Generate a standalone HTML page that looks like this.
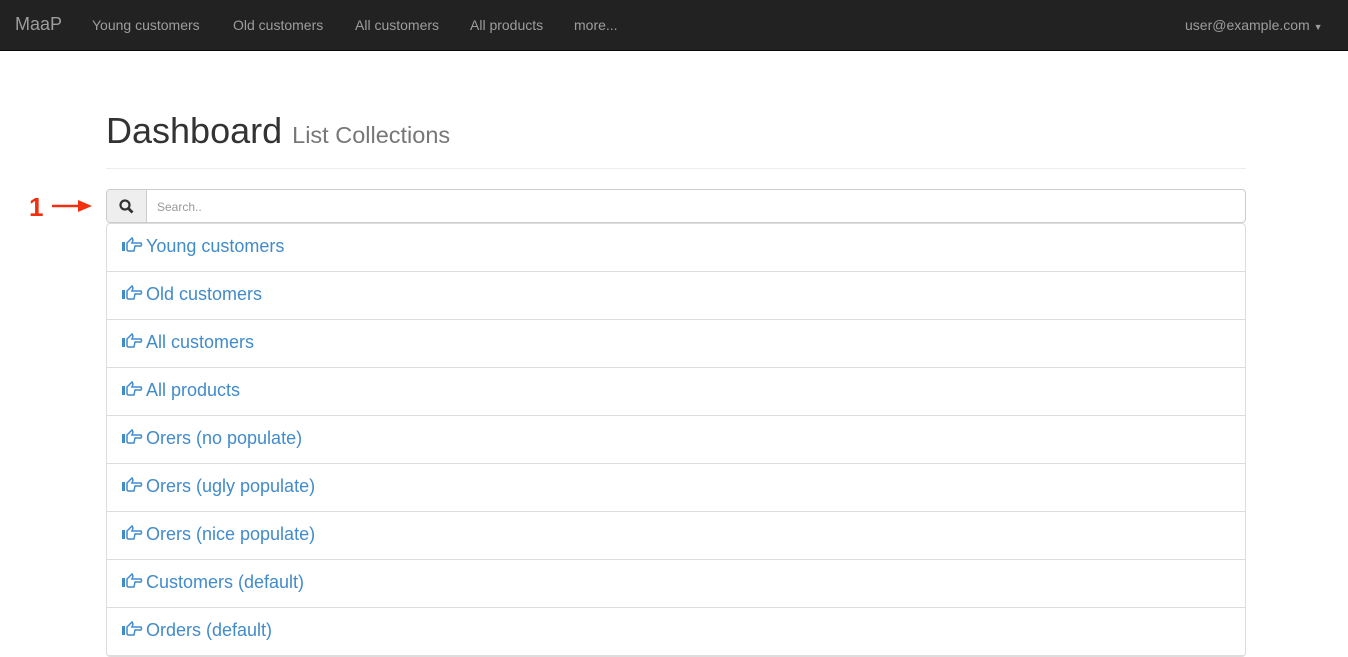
<!DOCTYPE html>
<html><head><style>
body{margin:0;font-family:"Liberation Sans",sans-serif;background:#fff;width:1348px;height:634px;overflow:hidden;position:relative}
.nav{height:50px;background:#222;border-bottom:1px solid #080808;position:relative;font-size:14px;color:#9d9d9d}
.nav span{position:absolute;top:17px}
.brand{font-size:18px;top:14px!important;left:15px}
h1{position:absolute;left:106px;top:111px;margin:0;font-size:36px;font-weight:500;color:#333;line-height:40px}
h1 small{font-size:23.5px;color:#777;font-weight:400}
.hr{position:absolute;left:106px;top:168px;width:1140px;border-top:1px solid #eee}
.search{position:absolute;left:106px;top:189px;width:1138px;height:32px;border:1px solid #ccc;border-radius:4px;overflow:hidden}
.addon{position:absolute;left:0;top:0;width:39px;height:32px;background:#eee;border-right:1px solid #ccc}
.ph{position:absolute;left:50px;top:10px;font-size:12px;color:#999}
.list{position:absolute;left:106px;top:223px;width:1138px;border:1px solid #ddd;border-radius:4px}
.item{height:47px;border-bottom:1px solid #ddd;position:relative;color:#428bca;font-size:18px}
.item svg{position:absolute;left:15px;top:13px}
.item span{position:absolute;left:39px;top:12px}
.one{position:absolute;left:29px;top:192px;color:#f2300f;font-weight:bold;font-size:26px}
</style></head><body>
<div class="nav"><span class="brand">MaaP</span><span style="left:92px">Young customers</span><span style="left:233px">Old customers</span><span style="left:355px">All customers</span><span style="left:470px">All products</span><span style="left:574px">more...</span><span style="left:1185px">user@example.com <span style="position:static;font-size:9px">&#9660;</span></span></div>
<h1>Dashboard <small>List Collections</small></h1>
<div class="hr"></div>
<div class="one">1</div>
<svg style="position:absolute;left:50px;top:197px" width="44" height="18"><line x1="2" y1="9" x2="30" y2="9" stroke="#f2300f" stroke-width="2.5"/><polygon points="28,3 42,9 28,15" fill="#f2300f"/></svg>
<div class="search"><div class="addon"><svg style="position:absolute;left:12px;top:9px" width="16" height="16"><circle cx="6" cy="6" r="4.5" fill="none" stroke="#333" stroke-width="2.2"/><line x1="9.2" y1="9.2" x2="13.5" y2="13.5" stroke="#333" stroke-width="2.8"/></svg></div><div class="ph">Search..</div></div>
<div class="list">
<div class="item"><svg width="22" height="16" viewBox="0 0 22 16"><rect x="0" y="5" width="3" height="9" fill="#428bca"/><path d="M5 6 L8 3 L10 1 L11 3 L10 6 L19 6 Q20 7.5 19 9 L13 9 L12 14 L6 14 L5 13 Z" fill="none" stroke="#428bca" stroke-width="1.5"/></svg><span>Young customers</span></div>
<div class="item"><svg width="22" height="16" viewBox="0 0 22 16"><rect x="0" y="5" width="3" height="9" fill="#428bca"/><path d="M5 6 L8 3 L10 1 L11 3 L10 6 L19 6 Q20 7.5 19 9 L13 9 L12 14 L6 14 L5 13 Z" fill="none" stroke="#428bca" stroke-width="1.5"/></svg><span>Old customers</span></div>
<div class="item"><svg width="22" height="16" viewBox="0 0 22 16"><rect x="0" y="5" width="3" height="9" fill="#428bca"/><path d="M5 6 L8 3 L10 1 L11 3 L10 6 L19 6 Q20 7.5 19 9 L13 9 L12 14 L6 14 L5 13 Z" fill="none" stroke="#428bca" stroke-width="1.5"/></svg><span>All customers</span></div>
<div class="item"><svg width="22" height="16" viewBox="0 0 22 16"><rect x="0" y="5" width="3" height="9" fill="#428bca"/><path d="M5 6 L8 3 L10 1 L11 3 L10 6 L19 6 Q20 7.5 19 9 L13 9 L12 14 L6 14 L5 13 Z" fill="none" stroke="#428bca" stroke-width="1.5"/></svg><span>All products</span></div>
<div class="item"><svg width="22" height="16" viewBox="0 0 22 16"><rect x="0" y="5" width="3" height="9" fill="#428bca"/><path d="M5 6 L8 3 L10 1 L11 3 L10 6 L19 6 Q20 7.5 19 9 L13 9 L12 14 L6 14 L5 13 Z" fill="none" stroke="#428bca" stroke-width="1.5"/></svg><span>Orers (no populate)</span></div>
<div class="item"><svg width="22" height="16" viewBox="0 0 22 16"><rect x="0" y="5" width="3" height="9" fill="#428bca"/><path d="M5 6 L8 3 L10 1 L11 3 L10 6 L19 6 Q20 7.5 19 9 L13 9 L12 14 L6 14 L5 13 Z" fill="none" stroke="#428bca" stroke-width="1.5"/></svg><span>Orers (ugly populate)</span></div>
<div class="item"><svg width="22" height="16" viewBox="0 0 22 16"><rect x="0" y="5" width="3" height="9" fill="#428bca"/><path d="M5 6 L8 3 L10 1 L11 3 L10 6 L19 6 Q20 7.5 19 9 L13 9 L12 14 L6 14 L5 13 Z" fill="none" stroke="#428bca" stroke-width="1.5"/></svg><span>Orers (nice populate)</span></div>
<div class="item"><svg width="22" height="16" viewBox="0 0 22 16"><rect x="0" y="5" width="3" height="9" fill="#428bca"/><path d="M5 6 L8 3 L10 1 L11 3 L10 6 L19 6 Q20 7.5 19 9 L13 9 L12 14 L6 14 L5 13 Z" fill="none" stroke="#428bca" stroke-width="1.5"/></svg><span>Customers (default)</span></div>
<div class="item"><svg width="22" height="16" viewBox="0 0 22 16"><rect x="0" y="5" width="3" height="9" fill="#428bca"/><path d="M5 6 L8 3 L10 1 L11 3 L10 6 L19 6 Q20 7.5 19 9 L13 9 L12 14 L6 14 L5 13 Z" fill="none" stroke="#428bca" stroke-width="1.5"/></svg><span>Orders (default)</span></div>
</div>
</body></html>
